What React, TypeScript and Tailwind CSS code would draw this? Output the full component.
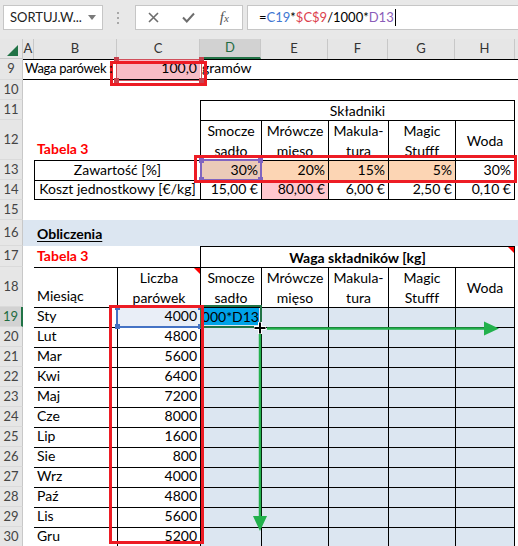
import type { ReactNode } from "react";

function cn(...parts: Array<string | false | null | undefined>) {
  return parts.filter(Boolean).join(" ");
}

const ingredients = [
  { w: "w-[61px]", lines: ["Smocze", "sadło"], pct: "30%", pctBg: "bg-[#ebcab8]", cost: "15,00 €", costBg: "" },
  { w: "w-[67px]", lines: ["Mrówcze", "mięso"], pct: "20%", pctBg: "bg-[#fcd5b4]", cost: "80,00 €", costBg: "bg-[#ffc7ce]" },
  { w: "w-[60px]", lines: ["Makula-", "tura"], pct: "15%", pctBg: "bg-[#fcd5b4]", cost: "6,00 €", costBg: "" },
  { w: "w-[67px]", lines: ["Magic", "Stufff"], pct: "5%", pctBg: "bg-[#fcd5b4]", cost: "2,50 €", costBg: "" },
  { w: "w-[60px]", lines: ["Woda"], pct: "30%", pctBg: "", cost: "0,10 €", costBg: "" },
];

const months = [
  ["Sty", "4000"],
  ["Lut", "4800"],
  ["Mar", "5600"],
  ["Kwi", "6400"],
  ["Maj", "7200"],
  ["Cze", "8000"],
  ["Lip", "1600"],
  ["Sie", "800"],
  ["Wrz", "4000"],
  ["Paź", "4800"],
  ["Lis", "5600"],
  ["Gru", "5200"],
];

function Comment() {
  return (
    <svg className="absolute right-0 top-0" width="6" height="6" viewBox="0 0 6 6">
      <polygon points="0,0 6,0 6,6" fill="#ff0000" />
    </svg>
  );
}

function RowHead({ n, active }: { n: number; active?: boolean }) {
  return (
    <div
      className={cn(
        "flex w-[23px] shrink-0 items-center justify-center border-b border-b-[#dadada] text-[13px]",
        active
          ? "border-r-2 border-r-[#217346] bg-[#d2d2d2] text-[#1e6b41]"
          : "border-r border-r-[#c8c8c8] bg-[#e6e6e6] text-[#444]",
      )}
    >
      {n}
    </div>
  );
}

function Row({
  n,
  h,
  active,
  className,
  children,
}: {
  n: number;
  h: string;
  active?: boolean;
  className?: string;
  children?: ReactNode;
}) {
  return (
    <div className={cn("flex", h)}>
      <RowHead n={n} active={active} />
      <div className={cn("flex flex-1", className)}>{children}</div>
    </div>
  );
}

function Cell({ w, className, children }: { w: string; className?: string; children?: ReactNode }) {
  return <div className={cn("relative flex shrink-0 whitespace-nowrap", w, className)}>{children}</div>;
}

function HeaderCells() {
  return (
    <>
      {ingredients.map((it, i) => (
        <Cell
          key={it.lines[0]}
          w={it.w}
          className={cn(
            "flex-col items-center justify-center border-l border-t border-black text-center leading-[20px]",
            i === 4 && "border-r",
          )}
        >
          {it.lines.map((l) => (
            <span key={l}>{l}</span>
          ))}
        </Cell>
      ))}
    </>
  );
}

function FormulaBar() {
  return (
    <div className="flex h-[39px] items-start bg-[#e8e8e8] pl-[3px] pt-[5px]">
      <div className="flex h-[25px] w-[100px] items-center justify-between border border-[#c6c6c6] bg-white pl-[6px] pr-[6px] text-[13px] text-[#222]">
        <span>SORTUJ.W...</span>
        <svg width="8" height="5" viewBox="0 0 8 5">
          <polygon points="0,0 8,0 4,5" fill="#7a7a7a" />
        </svg>
      </div>
      <div className="ml-[12px] flex w-[6px] flex-col items-center gap-[3px] pt-[7px]">
        <span className="h-[2px] w-[2px] bg-[#a8a8a8]" />
        <span className="h-[2px] w-[2px] bg-[#a8a8a8]" />
        <span className="h-[2px] w-[2px] bg-[#a8a8a8]" />
      </div>
      <div className="ml-[14px] flex h-[25px] w-[108px] items-center border border-[#c6c6c6] bg-white">
        <div className="flex w-[36px] justify-center">
          <svg width="11" height="11" viewBox="0 0 11 11">
            <path d="M1 1 L10 10 M10 1 L1 10" stroke="#6d6d6d" strokeWidth="1.6" />
          </svg>
        </div>
        <div className="flex w-[36px] justify-center">
          <svg width="13" height="11" viewBox="0 0 13 11">
            <path d="M1 5.5 L4.8 9.5 L12 1.5" stroke="#6d6d6d" strokeWidth="2" fill="none" />
          </svg>
        </div>
        <div className="flex w-[36px] justify-center font-['Liberation_Serif',serif] italic text-[#555]">
          <span className="text-[15px]">f</span>
          <span className="mt-[4px] text-[11px]">x</span>
        </div>
      </div>
      <div className="ml-[4px] flex h-[25px] flex-1 items-center border-y border-l border-[#c6c6c6] bg-white pl-[11px] text-[13px]">
        <span>=</span>
        <span className="text-[#3f77d2]">C19</span>
        <span>*</span>
        <span className="text-[#dc3f4e]">$C$9</span>
        <span>/1000*</span>
        <span className="text-[#8a5cb8]">D13</span>
        <span className="ml-[1px] h-[17px] w-[1px] bg-black" />
      </div>
    </div>
  );
}

function ColumnHeaders() {
  const letters = [
    ["A", "w-[11px]"],
    ["B", "w-[83px]"],
    ["C", "w-[83px]"],
    ["D", "w-[61px]"],
    ["E", "w-[67px]"],
    ["F", "w-[60px]"],
    ["G", "w-[67px]"],
    ["H", "w-[60px]"],
  ];
  return (
    <div className="flex h-[20px] bg-[#e6e6e6] text-[13px] text-[#333]">
      <div className="relative w-[23px] shrink-0 border-b border-r border-[#c8c8c8]">
        <svg className="absolute left-[7px] top-[6px]" width="11" height="11" viewBox="0 0 11 11">
          <polygon points="11,0 11,11 0,11" fill="#217346" />
        </svg>
      </div>
      {letters.map(([l, w]) => (
        <div
          key={l}
          className={cn(
            "flex shrink-0 items-center justify-center border-r border-[#c8c8c8]",
            w,
            l === "D" && "border-b-2 border-b-[#217346] bg-[#d2d2d2] text-[#1e6b41]",
          )}
        >
          {l}
        </div>
      ))}
      <div className="flex-1" />
    </div>
  );
}

function RefBox({ box, sq }: { box: string; sq: string }) {
  return (
    <div className={cn("pointer-events-none absolute", box)}>
      <span className={cn("absolute -left-[3px] -top-[3px] h-[5px] w-[5px]", sq)} />
      <span className={cn("absolute -right-[3px] -top-[3px] h-[5px] w-[5px]", sq)} />
      <span className={cn("absolute -bottom-[3px] -left-[3px] h-[5px] w-[5px]", sq)} />
      <span className={cn("absolute -bottom-[3px] -right-[3px] h-[5px] w-[5px]", sq)} />
    </div>
  );
}

function Overlays() {
  return (
    <>
      <RefBox box="left-[116px] top-[59px] h-[22px] w-[86px] border border-[#d0505c]" sq="bg-[#c8424e]" />
      <RefBox box="left-[200px] top-[159px] h-[22px] w-[62px] border-2 border-[#8064c0]" sq="bg-[#8064c0]" />
      <RefBox box="left-[116px] top-[306px] h-[22px] w-[86px] border-2 border-[#4472c4]" sq="bg-[#4472c4]" />

      <div className="absolute left-[200px] top-[305px] h-[23px] w-[62px] border-2 border-[#217346]">
        <div className="absolute inset-x-[1px] top-[1px] flex h-[17px] justify-end overflow-hidden">
          <span className="whitespace-nowrap bg-[#00a2e8] leading-[17px]">1000*D13</span>
        </div>
      </div>

      <div className="absolute left-[110px] top-[61px] h-[25px] w-[97px] border-[3px] border-[#ed1c24]" />
      <div className="absolute left-[194px] top-[155px] h-[28px] w-[323px] border-[3px] border-[#ed1c24]" />
      <div className="absolute left-[109px] top-[305px] h-[239px] w-[95px] border-[3px] border-[#ed1c24]" />

      <svg className="pointer-events-none absolute left-0 top-0" width="518" height="546" viewBox="0 0 518 546">
        <line x1="267" y1="328.5" x2="486" y2="328.5" stroke="#22b14c" strokeWidth="2.5" />
        <polygon points="484,321.5 499,328.5 484,335.5" fill="#22b14c" />
        <line x1="260" y1="331" x2="260" y2="518" stroke="#22b14c" strokeWidth="2.5" />
        <polygon points="253,516 267,516 260,531" fill="#22b14c" />
        <path d="M260 322 V334 M254 328 H266" stroke="#ffffff" strokeWidth="4" />
        <path d="M260 322.5 V333.5 M254.5 328 H265.5" stroke="#000000" strokeWidth="2" />
      </svg>
    </>
  );
}

export default function App() {
  return (
    <div className="relative h-[546px] w-[518px] overflow-hidden bg-white font-['Lato',sans-serif] text-[14px] text-black">
      <FormulaBar />
      <ColumnHeaders />

      <Row n={9} h="h-[21px]" className="border-y border-black">
        <Cell w="w-[94px]" className="relative z-10 items-end pb-[1px] pl-[2px] text-[13px] tracking-[-0.3px]">
          Waga parówek :
        </Cell>
        <Cell w="w-[83px]" className="items-end justify-end bg-[#f7bcc5] pb-[1px] pr-[3px]">
          100,0
        </Cell>
        <Cell w="w-[120px]" className="items-end pb-[1px] pl-[2px]">
          gramów
        </Cell>
      </Row>

      <Row n={10} h="h-[20px]" />

      <Row n={11} h="h-[20px]">
        <Cell w="w-[177px]" />
        <Cell w="w-[315px]" className="items-center justify-center border-x border-t border-black">
          Składniki
        </Cell>
      </Row>

      <Row n={12} h="h-[40px]">
        <Cell w="w-[11px]" />
        <Cell w="w-[83px]" className="items-end pb-[1px] pl-[3px] font-bold text-[#ff0000]">
          Tabela 3
        </Cell>
        <Cell w="w-[83px]" />
        <HeaderCells />
      </Row>

      <Row n={13} h="h-[20px]">
        <Cell w="w-[11px]" />
        <Cell w="w-[166px]" className="items-end justify-center border-l border-t border-black">
          Zawartość [%]
        </Cell>
        {ingredients.map((it, i) => (
          <Cell
            key={it.pct + i}
            w={it.w}
            className={cn("items-end justify-end border-l border-t border-black pr-[3px]", it.pctBg, i === 4 && "border-r")}
          >
            {it.pct}
          </Cell>
        ))}
      </Row>

      <Row n={14} h="h-[20px]">
        <Cell w="w-[11px]" />
        <Cell w="w-[166px]" className="items-end justify-center border-y border-l border-black">
          Koszt jednostkowy [€/kg]
        </Cell>
        {ingredients.map((it, i) => (
          <Cell
            key={it.cost}
            w={it.w}
            className={cn("items-end justify-end border-y border-l border-black pr-[3px]", it.costBg, i === 4 && "border-r")}
          >
            {it.cost}
          </Cell>
        ))}
      </Row>

      <Row n={15} h="h-[20px]" />

      <Row n={16} h="h-[26px]" className="bg-[#dce6f1]">
        <Cell w="w-[11px]" />
        <Cell w="w-[83px]" className="items-end pb-[2px] pl-[3px] font-bold underline underline-offset-2">
          Obliczenia
        </Cell>
      </Row>

      <Row n={17} h="h-[21px]">
        <Cell w="w-[11px]" />
        <Cell w="w-[83px]" className="items-end pb-[1px] pl-[3px] font-bold text-[#ff0000]">
          Tabela 3
        </Cell>
        <Cell w="w-[83px]" />
        <Cell w="w-[315px]" className="items-center justify-center border-x border-t border-black font-bold">
          Waga składników [kg]
          <Comment />
        </Cell>
      </Row>

      <Row n={18} h="h-[40px]">
        <Cell w="w-[11px]" />
        <Cell w="w-[83px]" className="items-end border-t border-black pb-[1px] pl-[3px]">
          Miesiąc
        </Cell>
        <Cell w="w-[83px]" className="flex-col items-center justify-center border-l border-t border-black leading-[20px]">
          <span>Liczba</span>
          <span>parówek</span>
          <Comment />
        </Cell>
        <HeaderCells />
      </Row>

      {months.map(([m, v], r) => (
        <Row key={m} n={19 + r} h="h-[20px]" active={r === 0}>
          <Cell w="w-[11px]" />
          <Cell w="w-[83px]" className="items-end border-t border-black pb-[1px] pl-[3px]">
            {m}
          </Cell>
          <Cell
            w="w-[83px]"
            className={cn("items-end justify-end border-l border-t border-black pb-[1px] pr-[3px]", r === 0 && "bg-[#e9eef7]")}
          >
            {v}
          </Cell>
          {ingredients.map((it, i) => (
            <Cell
              key={it.lines[0]}
              w={it.w}
              className={cn("border-l border-t border-black bg-[#dce6f1]", i === 4 && "border-r")}
            />
          ))}
        </Row>
      ))}

      <Overlays />
    </div>
  );
}
